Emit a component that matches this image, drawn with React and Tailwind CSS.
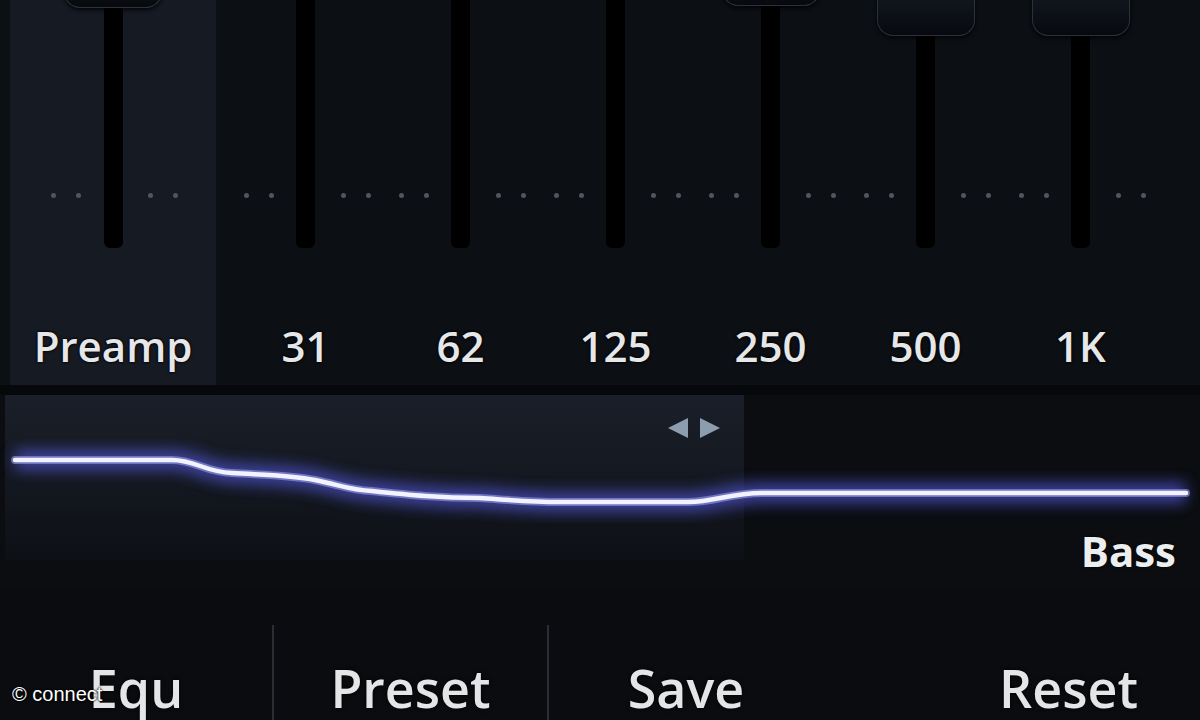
import React from 'react';

const BANDS = [
  { label: 'Preamp', knob: 8, wide: true },
  { label: '31', knob: -12 },
  { label: '62', knob: -12 },
  { label: '125', knob: -12 },
  { label: '250', knob: 6 },
  { label: '500', knob: 36 },
  { label: '1K', knob: 36 },
];

const DOT_OFFSETS = [-60, -35, 37, 62];
const KNOB_H = 64;

const Slider = ({ band, first }) => {
  return (
    <div
      className={`flex flex-col items-center ${
        band.wide ? 'w-[206px] bg-[#161a23]' : 'w-[155px]'
      } ${first ? 'ml-[12px]' : ''}`}
    >
      <div className="relative h-[248px] w-full overflow-hidden flex flex-col items-center">
        {/* scale dots behind the track */}
        <div className="absolute left-0 right-0 top-[193px] h-[5px]">
          {DOT_OFFSETS.map((off) => (
            <span
              key={off}
              className="absolute top-0 h-[5px] w-[5px] rounded-full bg-[#50555f]"
              style={{ left: `calc(50% + ${off - 2}px)` }}
            />
          ))}
        </div>
        <div
          className="relative z-10 w-[98px] shrink-0 rounded-b-[16px] border border-t-0 border-[#2a303c] bg-gradient-to-b from-[#1a202c] to-[#07090d] shadow-[0_2px_4px_rgba(0,0,0,0.8)]"
          style={{ height: KNOB_H, marginTop: band.knob - KNOB_H }}
        />
        <div className="relative z-10 w-[19px] flex-1 rounded-b-[6px] bg-black" />
      </div>
      <div className="h-[137px] w-full pt-[77px] text-center">
        <span className="text-[42px] leading-none font-semibold text-[#e6e7e9] [text-shadow:0_0_3px_#000,0_0_2px_#000]">
          {band.label}
        </span>
      </div>
    </div>
  );
};

const CURVE =
  'M15 65 L172 65 C195 65 205 77 232 78 C265 80 290 80 315 85 C340 90 350 95 372 96 C410 100 440 103 480 103 C510 105 530 107 560 107 L688 107 C715 107 730 98 762 98 L1186 98';

const Curve = () => (
  <svg
    className="absolute inset-0 pointer-events-none"
    width="1200"
    height="195"
    viewBox="0 0 1200 195"
  >
    <defs>
      <filter id="glow" x="-10%" y="-50%" width="120%" height="200%">
        <feGaussianBlur stdDeviation="7" />
      </filter>
      <linearGradient id="zero" x1="0" x2="1" y1="0" y2="0">
        <stop offset="0" stopColor="#8a8272" stopOpacity="0.9" />
        <stop offset="0.7" stopColor="#6e6a62" stopOpacity="0.6" />
        <stop offset="1" stopColor="#5a5a66" stopOpacity="0" />
      </linearGradient>
    </defs>
    <line x1="15" y1="98" x2="380" y2="98" stroke="url(#zero)" strokeWidth="3" />
    <path d={CURVE} fill="none" stroke="#4448b0" strokeWidth="22" opacity="0.8" filter="url(#glow)" />
    <path d={CURVE} fill="none" stroke="#9a9ee8" strokeWidth="8" opacity="0.6" strokeLinecap="round" />
    <path d={CURVE} fill="none" stroke="#f2f3ff" strokeWidth="4.5" strokeLinecap="round" />
  </svg>
);

const BUTTONS = [
  { label: 'Equ', cls: 'w-[272px] justify-center' },
  { label: 'Preset', cls: 'w-[275px] justify-center border-l-2 border-[#2a2e34]' },
  { label: 'Save', cls: 'w-[276px] justify-center border-l-2 border-[#2a2e34]' },
  { label: 'Reset', cls: 'flex-1 justify-end pr-[62px]' },
];

export default function App() {
  return (
    <div
      className="relative h-[720px] w-[1200px] overflow-hidden bg-[#0b0d11]"
      style={{ fontFamily: '"Open Sans", "Noto Sans", sans-serif' }}
    >
      {/* sliders */}
      <div className="flex h-[385px] pl-[10px] bg-[#0c0f13]">
        {BANDS.map((b, i) => (
          <Slider key={b.label} band={b} first={i === 1} />
        ))}
      </div>
      <div className="h-[10px] bg-[#07080b]" />

      {/* response graph */}
      <div className="relative h-[195px]">
        <div className="ml-[5px] flex h-[165px] w-[739px] justify-end bg-gradient-to-b from-[#1a1f29] via-[#141820] to-[#0d1015] pr-[24px] pt-[23px]">
          <svg width="52" height="20" viewBox="0 0 52 20">
            <polygon points="0,10 20,0 20,20" fill="#8d9db0" />
            <polygon points="32,0 52,10 32,20" fill="#8d9db0" />
          </svg>
        </div>
        <Curve />
        <div className="absolute right-[24px] top-[135px] text-[42px] leading-none font-bold text-[#eceef0] [text-shadow:0_0_3px_#000]">
          Bass
        </div>
      </div>

      {/* bottom buttons */}
      <div className="flex h-[130px] pt-[35px] bg-[#0a0c0f]">
        {BUTTONS.map((b) => (
          <div key={b.label} className={`flex h-full pt-[37px] ${b.cls}`}>
            <span className="text-[52px] leading-none font-semibold text-[#e4e5e7] [text-shadow:0_0_4px_#000]">
              {b.label}
            </span>
          </div>
        ))}
      </div>

      <div
        className="absolute left-[12px] top-[684px] text-[20px] leading-none text-white [text-shadow:0_0_2px_#000,0_0_2px_#000]"
        style={{ fontFamily: '"Liberation Sans", Arial, sans-serif' }}
      >
        © connect
      </div>
    </div>
  );
}
